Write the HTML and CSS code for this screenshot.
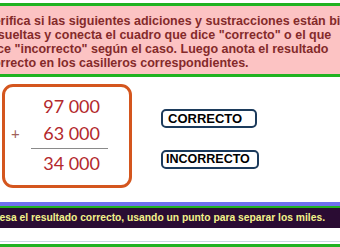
FILE: index.html
```html
<!DOCTYPE html>
<html>
<head>
<meta charset="utf-8">
<link rel="stylesheet" href="styles.css">
</head>
<body>
<div class="page">
  <div class="header">
    <p class="intro">Verifica si las siguientes adiciones y sustracciones están bien<br>resueltas y conecta el cuadro que dice "correcto" o el que<br>dice "incorrecto" según el caso. Luego anota el resultado<br>correcto en los casilleros correspondientes.</p>
  </div>
  <div class="main">
    <div class="sum">
      <div class="row"><span class="op"></span><span class="num">97 000</span></div>
      <div class="row"><span class="op">+</span><span class="num">63 000</span></div>
      <div class="rule"></div>
      <div class="row"><span class="op"></span><span class="num">34 000</span></div>
    </div>
    <div class="choices">
      <div class="btn btn-c">CORRECTO</div>
      <div class="btn btn-i">INCORRECTO</div>
    </div>
  </div>
  <div class="bar">
    <div class="bar-blue"></div>
    <div class="bar-text">Ingresa el resultado correcto, usando un punto para separar los miles.</div>
  </div>
  <div class="foot"></div>
</div>
</body>
</html>
```
FILE: styles.css
```css
html, body {
  margin: 0;
  padding: 0;
  background: #ffffff;
  overflow: hidden;
}
.page {
  width: 340px;
  height: 247px;
  overflow: hidden;
  font-family: "Liberation Sans", Arial, sans-serif;
}
.header {
  margin-top: 3px;
  border-top: 3px solid #21b321;
  border-bottom: 3px solid #21b321;
  background: #fcc3c3;
  height: 68px;
  overflow: hidden;
}
.intro {
  margin: 8px 0 0 -14px;
  white-space: nowrap;
  font-weight: bold;
  font-size: 12.5px;
  line-height: 14px;
  color: #842a2a;
}
.main {
  display: flex;
  height: 125px;
}
.sum {
  margin: 7px 0 0 2px;
  width: 124px;
  height: 98px;
  border: 3px solid #d4561e;
  border-radius: 11px;
  display: flex;
  flex-direction: column;
  font-family: Lato, "Open Sans", sans-serif;
  color: #b3282c;
  font-size: 18px;
}
.row {
  display: flex;
  align-items: center;
  height: 27px;
}
.row:first-child {
  margin-top: 5px;
}
.op {
  width: 12px;
  margin-left: 6px;
  font-size: 15px;
  color: #a0625a;
}
.num {
  width: 77px;
  text-align: right;
}
.rule {
  margin: 2px 0 0 26px;
  width: 77px;
  height: 1px;
  background: #8a8a8a;
}
.choices {
  display: flex;
  flex-direction: column;
  margin-left: 29px;
}
.btn {
  box-sizing: border-box;
  height: 19px;
  border: 2px solid #1c3b5c;
  border-radius: 5px;
  font-weight: bold;
  font-size: 13px;
  line-height: 15px;
  color: #000;
  padding-left: 5px;
}
.btn-c {
  margin-top: 32px;
  width: 96px;
}
.btn-i {
  margin-top: 22px;
  width: 98px;
  padding-left: 3px;
  font-size: 12.5px;
}
.bar-blue {
  height: 4px;
  background: #6f70ee;
}
.bar-text {
  border-top: 2px solid #21b321;
  height: 20px;
  background: #2a0c33;
  color: #f2f28a;
  font-weight: bold;
  font-size: 10.3px;
  line-height: 20px;
  white-space: nowrap;
  margin-left: -20px;
}
.foot {
  margin-top: 13px;
  border-top: 1px solid #c8dadf;
  height: 2px;
  border-bottom: 4px solid #21b321;
}
```
